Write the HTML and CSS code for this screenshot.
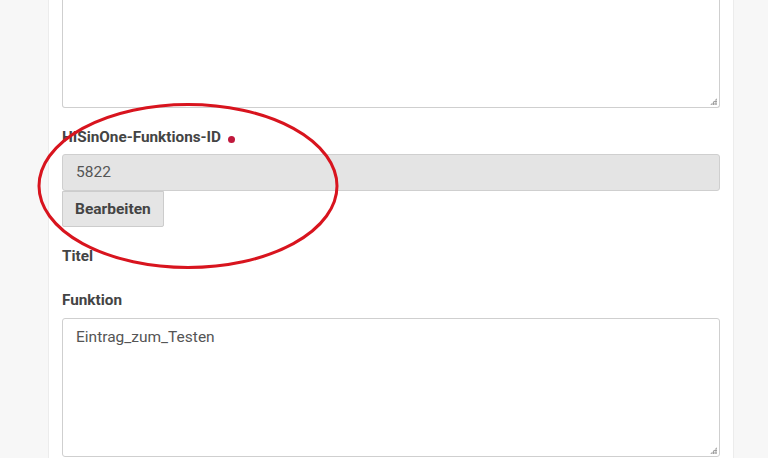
FILE: index.html
```html
<!DOCTYPE html>
<html lang="de">
<head>
<meta charset="utf-8">
<link rel="stylesheet" href="styles.css">
</head>
<body>
<main class="panel">
  <div class="field field-first">
    <div class="textarea textarea-top"><span class="grip"></span></div>
  </div>
  <div class="field field-id">
    <label class="label">HISinOne-Funktions-ID <span class="req"></span></label>
    <div class="input readonly">5822</div>
    <button class="btn">Bearbeiten</button>
    <svg class="mark" width="310" height="172" viewBox="0 0 310 172">
      <ellipse cx="155" cy="86" rx="149" ry="81.5" fill="none" stroke="#d8141e" stroke-width="3"/>
    </svg>
  </div>
  <div class="field field-title">
    <label class="label">Titel</label>
  </div>
  <div class="field field-func">
    <label class="label">Funktion</label>
    <div class="textarea textarea-func">Eintrag_zum_Testen<span class="grip"></span></div>
  </div>
</main>
</body>
</html>
```
FILE: styles.css
```css
html, body {
  margin: 0;
  padding: 0;
  background: #f7f7f7;
  height: 458px;
  overflow: hidden;
}
body {
  font-family: Roboto, "Liberation Sans", sans-serif;
  color: #444;
}
.panel {
  margin-left: 48px;
  height: 458px;
  background: #fff;
  border-left: 1px solid #ececec;
  border-right: 1px solid #ececec;
  padding: 0 13px;
  box-sizing: content-box;
  width: 658px;
}
.field { position: relative; }
.label {
  display: block;
  font-weight: 700;
  font-size: 15.3px;
  line-height: 20px;
  color: #444;
}
.req {
  display: inline-block;
  width: 7px;
  height: 7px;
  border-radius: 50%;
  background: #c0183c;
  margin-left: 3px;
  vertical-align: -1px;
}
.textarea {
  position: relative;
  box-sizing: border-box;
  border: 1px solid #cfcfcf;
  border-radius: 3px;
  background: #fff;
  font-size: 15.5px;
  color: #555;
  padding: 9px 13px;
}
.textarea-top {
  height: 108px;
  border-top: none;
  border-top-left-radius: 0;
  border-top-right-radius: 0;
}
.grip {
  position: absolute;
  right: 2px;
  bottom: 2px;
  width: 7px;
  height: 7px;
  background:
    radial-gradient(circle, #999 0.8px, transparent 1.2px) 0 0 / 2.4px 2.4px;
  clip-path: polygon(100% 0, 100% 100%, 0 100%);
}
.field-id { margin-top: 19px; }
.input {
  box-sizing: border-box;
  height: 37px;
  margin-top: 7px;
  border: 1px solid #cfcfcf;
  border-radius: 3px;
  background: #e4e4e4;
  font-size: 15.5px;
  line-height: 35px;
  padding: 0 13px;
  color: #555;
}
.btn {
  display: block;
  box-sizing: border-box;
  height: 36px;
  padding: 0 12px;
  font-family: inherit;
  font-weight: 700;
  font-size: 15.5px;
  color: #444;
  background: #e5e5e5;
  border: 1px solid #cccccc;
  border-radius: 0 0 2px 2px;
}
.mark {
  position: absolute;
  left: -29px;
  top: -27px;
  pointer-events: none;
}
.field-title { margin-top: 19px; }
.field-func { margin-top: 24px; }
.textarea-func {
  margin-top: 8px;
  height: 139px;
  padding-top: 9px;
}
```
